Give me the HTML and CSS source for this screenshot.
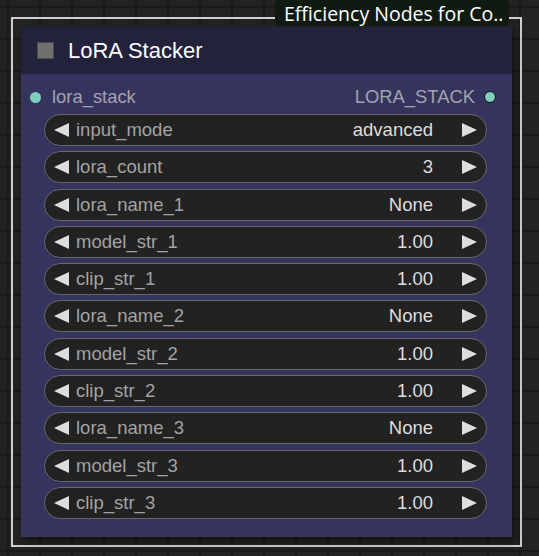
FILE: index.html
```html
<!DOCTYPE html>
<html>
  <head>
    <meta name="viewport" content="width=device-width, initial-scale=1.0" />
    <link rel="stylesheet" href="styles.css">
  </head>

  <body>
    <div class="canvas">
      <div class="selection">
        <div class="node">
          <div class="node-title">
            <span class="collapse-box"></span>
            <span class="title-text">LoRA Stacker</span>
          </div>

          <div class="node-body">
            <div class="slots">
              <div class="slot slot-in">
                <span class="dot"></span>
                <span>lora_stack</span>
              </div>
              <div class="slot slot-out">
                <span>LORA_STACK</span>
                <span class="dot dot-out"></span>
              </div>
            </div>

            <div class="widgets">
              <div class="widget">
                <span class="arrow-left"></span>
                <span class="label">input_mode</span>
                <span class="value">advanced</span>
                <span class="arrow-right"></span>
              </div>
              <div class="widget">
                <span class="arrow-left"></span>
                <span class="label">lora_count</span>
                <span class="value">3</span>
                <span class="arrow-right"></span>
              </div>
              <div class="widget">
                <span class="arrow-left"></span>
                <span class="label">lora_name_1</span>
                <span class="value">None</span>
                <span class="arrow-right"></span>
              </div>
              <div class="widget">
                <span class="arrow-left"></span>
                <span class="label">model_str_1</span>
                <span class="value">1.00</span>
                <span class="arrow-right"></span>
              </div>
              <div class="widget">
                <span class="arrow-left"></span>
                <span class="label">clip_str_1</span>
                <span class="value">1.00</span>
                <span class="arrow-right"></span>
              </div>
              <div class="widget">
                <span class="arrow-left"></span>
                <span class="label">lora_name_2</span>
                <span class="value">None</span>
                <span class="arrow-right"></span>
              </div>
              <div class="widget">
                <span class="arrow-left"></span>
                <span class="label">model_str_2</span>
                <span class="value">1.00</span>
                <span class="arrow-right"></span>
              </div>
              <div class="widget">
                <span class="arrow-left"></span>
                <span class="label">clip_str_2</span>
                <span class="value">1.00</span>
                <span class="arrow-right"></span>
              </div>
              <div class="widget">
                <span class="arrow-left"></span>
                <span class="label">lora_name_3</span>
                <span class="value">None</span>
                <span class="arrow-right"></span>
              </div>
              <div class="widget">
                <span class="arrow-left"></span>
                <span class="label">model_str_3</span>
                <span class="value">1.00</span>
                <span class="arrow-right"></span>
              </div>
              <div class="widget">
                <span class="arrow-left"></span>
                <span class="label">clip_str_3</span>
                <span class="value">1.00</span>
                <span class="arrow-right"></span>
              </div>
            </div>
          </div>
        </div>
      </div>

      <div class="badge">Efficiency Nodes for Co..</div>
    </div>
  </body>
</html>
```

FILE: styles.css
```css
body {
  margin: 0;
  width: 539px;
  height: 556px;
  overflow: hidden;
  background-color: #232323;
  background-image:
    linear-gradient(to right, #1a1a1a 2px, transparent 2px),
    linear-gradient(to bottom, #1a1a1a 2px, transparent 2px);
  background-size: 32px 32px;
  background-position: 7px 6px;
  font-family: 'Liberation Sans', Arial, sans-serif;
}

.canvas {
  position: relative;
  padding: 17px 0 0 11px;
}

/* selected node outline */
.selection {
  width: fit-content;
  border: 2px solid #cfcfcf;
  padding: 8px;
}

.node {
  width: 491px;
  box-shadow: 3px 4px 8px rgba(0, 0, 0, 0.55);
}

.node-title {
  height: 47px;
  background: #22223a;
  display: flex;
  align-items: center;
  padding-left: 16px;
}

.collapse-box {
  width: 15px;
  height: 15px;
  background: #707070;
  border: 1px solid #4a4a55;
  margin-right: 14px;
}

.title-text {
  color: #fff;
  font-size: 22px;
}

.node-body {
  background: #34345f;
  padding: 9px 25px 18px 23px;
}

.slots {
  height: 28px;
  display: flex;
  justify-content: space-between;
  align-items: center;
  margin: 0 -9px 3px -14px;
  color: #a3a3ad;
  font-size: 18.4px;
}

.slot {
  display: flex;
  align-items: center;
}

.dot {
  width: 11px;
  height: 11px;
  border-radius: 50%;
  background: #7fcdbb;
  margin-right: 11px;
}

.dot-out {
  width: 10px;
  height: 10px;
  border: 1px solid #111;
  margin: 0 0 0 9px;
}

.widgets {
  display: flex;
  flex-direction: column;
  gap: 5.3px;
}

.widget {
  height: 30px;
  border: 1px solid #686868;
  border-radius: 16px;
  background: #222;
  display: flex;
  align-items: center;
  font-size: 18.5px;
  padding: 0 9px 0 9px;
}

.arrow-left {
  width: 0;
  height: 0;
  border-top: 7.5px solid transparent;
  border-bottom: 7.5px solid transparent;
  border-right: 15px solid #ddd;
  margin-right: 7px;
}

.arrow-right {
  width: 0;
  height: 0;
  border-top: 7.5px solid transparent;
  border-bottom: 7.5px solid transparent;
  border-left: 15px solid #ddd;
  margin-left: 29px;
}

.label {
  color: #a3a3a3;
  flex: 1;
}

.value {
  color: #ddd;
}

.badge {
  position: absolute;
  left: 275px;
  top: 0;
  height: 26px;
  box-sizing: border-box;
  padding: 0 6px 0 9px;
  background: #0f1b10;
  border-radius: 0 0 6px 6px;
  color: #fff;
  font-family: 'Open Sans', sans-serif;
  font-size: 19.5px;
  line-height: 27px;
  white-space: nowrap;
}
```
